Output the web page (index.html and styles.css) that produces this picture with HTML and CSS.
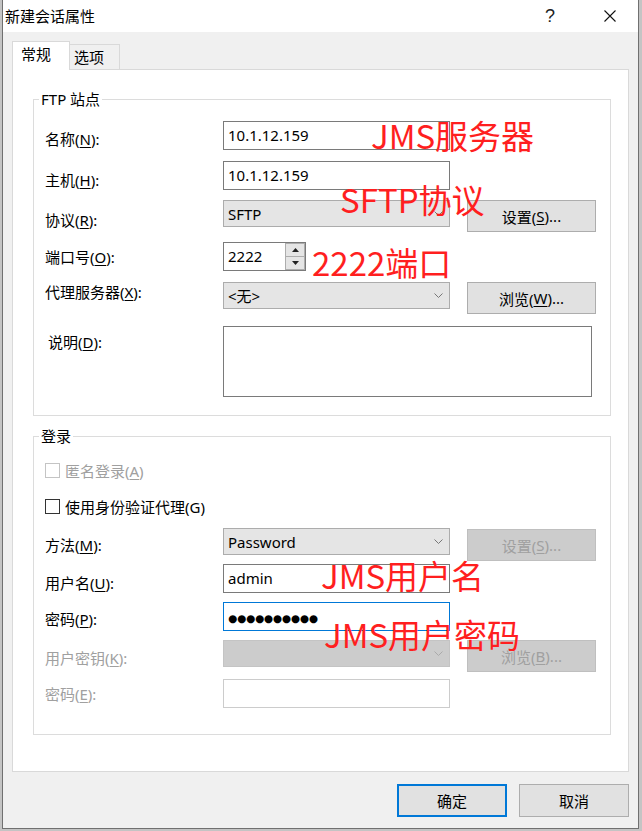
FILE: index.html
```html
<!DOCTYPE html>
<html lang="zh-CN">
<head>
<meta charset="utf-8">
<title>新建会话属性</title>
<link rel="stylesheet" href="styles.css">
</head>
<body>
<div class="window">
  <div class="titlebar">
    <span class="title">新建会话属性</span>
    <span class="help">?</span>
    <span class="close"><svg width="12" height="12" viewBox="0 0 12 12"><path d="M0.5 0.5L11.5 11.5M11.5 0.5L0.5 11.5" stroke="#111" stroke-width="1.1" fill="none"/></svg></span>
  </div>
  <div class="body">
    <div class="tabs">
      <div class="tab active">常规</div>
      <div class="tab">选项</div>
    </div>
    <div class="panel">
      <fieldset class="group group-ftp">
        <legend>FTP 站点</legend>
        <div class="row row-name">
          <label class="lbl lbl-name">名称(<u>N</u>):</label>
          <div class="field">10.1.12.159</div>
        </div>
        <div class="row row-host">
          <label class="lbl lbl-host">主机(<u>H</u>):</label>
          <div class="field">10.1.12.159</div>
        </div>
        <div class="row row-proto">
          <label class="lbl lbl-proto">协议(<u>R</u>):</label>
          <div class="select"><span>SFTP</span><svg class="chev" width="9" height="5" viewBox="0 0 9 5"><path d="M0.5 0.5L4.5 4.5L8.5 0.5" stroke="#777" fill="none"/></svg></div>
          <div class="btn">设置(<u>S</u>)...</div>
        </div>
        <div class="row row-port">
          <label class="lbl lbl-port">端口号(<u>O</u>):</label>
          <div class="field field-port">
            <span class="port-val">2222</span>
            <div class="spin">
              <div class="spin-btn"><svg width="7" height="4" viewBox="0 0 7 4"><path d="M0 4L3.5 0L7 4Z" fill="#222"/></svg></div>
              <div class="spin-btn"><svg width="7" height="4" viewBox="0 0 7 4"><path d="M0 0L3.5 4L7 0Z" fill="#222"/></svg></div>
            </div>
          </div>
        </div>
        <div class="row row-proxy">
          <label class="lbl lbl-proxy">代理服务器(<u>X</u>):</label>
          <div class="select"><span>&lt;无&gt;</span><svg class="chev" width="9" height="5" viewBox="0 0 9 5"><path d="M0.5 0.5L4.5 4.5L8.5 0.5" stroke="#777" fill="none"/></svg></div>
          <div class="btn">浏览(<u>W</u>)...</div>
        </div>
        <div class="row row-desc">
          <label class="lbl lbl-desc">说明(<u>D</u>):</label>
          <div class="textarea"></div>
        </div>
      </fieldset>

      <fieldset class="group group-login">
        <legend>登录</legend>
        <div class="check-row check-anon disabled">
          <span class="box"></span><span>匿名登录(<u>A</u>)</span>
        </div>
        <div class="check-row check-agent">
          <span class="box"></span><span>使用身份验证代理(G)</span>
        </div>
        <div class="row row-method">
          <label class="lbl lbl-method">方法(<u>M</u>):</label>
          <div class="select"><span>Password</span><svg class="chev" width="9" height="5" viewBox="0 0 9 5"><path d="M0.5 0.5L4.5 4.5L8.5 0.5" stroke="#777" fill="none"/></svg></div>
          <div class="btn btn-disabled btn-low">设置(<u>S</u>)...</div>
        </div>
        <div class="row row-user">
          <label class="lbl lbl-user">用户名(<u>U</u>):</label>
          <div class="field">admin</div>
        </div>
        <div class="row row-pass">
          <label class="lbl lbl-pass">密码(<u>P</u>):</label>
          <div class="field field-focus"><span class="dots">●●●●●●●●●●</span></div>
        </div>
        <div class="row row-key">
          <label class="lbl lbl-key disabled">用户密钥(<u>K</u>):</label>
          <div class="select select-disabled"><span></span><svg class="chev" width="9" height="5" viewBox="0 0 9 5"><path d="M0.5 0.5L4.5 4.5L8.5 0.5" stroke="#aaa" fill="none"/></svg></div>
          <div class="btn btn-disabled">浏览(<u>B</u>)...</div>
        </div>
        <div class="row row-phrase">
          <label class="lbl lbl-phrase disabled">密码(<u>E</u>):</label>
          <div class="field field-disabled"></div>
        </div>
      </fieldset>
    </div>
    <div class="footer">
      <div class="dbtn dbtn-default">确定</div>
      <div class="dbtn">取消</div>
    </div>
  </div>

  <div class="note note-server">JMS服务器</div>
  <div class="note note-sftp">SFTP协议</div>
  <div class="note note-port">2222端口</div>
  <div class="note note-user">JMS用户名</div>
  <div class="note note-pass">JMS用户密码</div>
</div>
</body>
</html>
```

FILE: styles.css
```css
* { box-sizing: border-box; }
html, body { margin: 0; padding: 0; }
body {
  background: #c4c4c4;
  font-family: "Noto Sans", "Noto Sans CJK SC", sans-serif;
  font-size: 15px;
  color: #000;
  width: 642px;
  height: 831px;
  overflow: hidden;
}
u { text-decoration: underline; text-underline-offset: 2px; text-decoration-thickness: 1px; }

.window {
  position: relative;
  margin-left: 2px;
  width: 637px;
  height: 829px;
  background: #f0f0f0;
  border: 1px solid #707070;
  border-top: none;
}

.titlebar {
  height: 32px;
  background: #fff;
  display: flex;
  align-items: center;
}
.title { padding-left: 2px; line-height: 32px; font-size: 15px; }
.help {
  margin-left: auto;
  width: 46px;
  text-align: center;
  font-family: "Liberation Sans", sans-serif;
  font-size: 18px;
  line-height: 20px;
  color: #222;
}
.close {
  width: 46px;
  margin-left: 14px;
  margin-right: 5px;
  display: flex;
  justify-content: center;
  align-items: center;
}

.body { padding: 9px 9px 0 9px; }

.tabs {
  display: flex;
  align-items: flex-start;
  height: 29px;
  margin-bottom: -1px;
  position: relative;
  z-index: 1;
}
.tab {
  border: 1px solid #d9d9d9;
  border-bottom: none;
  background: #f0f0f0;
  height: 25px;
  margin-top: 3px;
  width: 51px;
  margin-left: -1px;
  padding-left: 4px;
  line-height: 24px;
  font-size: 15px;
}
.tab.active {
  background: #fff;
  height: 29px;
  margin-top: 0;
  width: 58px;
  margin-left: 0;
  padding-left: 8px;
  position: relative;
  z-index: 2;
}

.panel {
  width: 617px;
  height: 703px;
  background: #fff;
  border: 1px solid #d9d9d9;
  padding: 0 18px 0 20px;
}

.group {
  margin: 0;
  border: 1px solid #dcdcdc;
  min-width: 0;
  width: 578px;
}
.group legend {
  line-height: 20px;
  padding: 0 2px;
  margin-left: -6px;
  font-size: 15px;
}
.group-ftp { margin-top: 19px; padding: 12px 0 18px 11px; }
.group-login { margin-top: 10px; padding: 14px 0 26px 11px; }

.row { display: flex; align-items: flex-start; }
.lbl { width: 178px; flex: none; line-height: 20px; font-size: 15px; }
.disabled { color: #a0a0a0; }

.row-host { margin-top: 11px; }
.row-proto { margin-top: 10px; }
.row-port { margin-top: 10px; }
.row-proxy { margin-top: 11px; }
.row-desc { margin-top: 12px; }

.lbl-name { padding-top: 8px; }
.lbl-host { padding-top: 9px; }
.lbl-proto { padding-top: 10px; }
.lbl-port { padding-top: 5px; }
.lbl-proxy { padding-top: 0; }
.lbl-desc { padding-top: 6px; padding-left: 3px; }

.field {
  width: 227px;
  height: 29px;
  background: #fff;
  border: 1px solid #7a7a7a;
  padding-left: 4px;
  line-height: 27px;
  font-size: 15px;
  flex: none;
}
.field-focus { border-color: #0078d7; }
.field-disabled { border-color: #cccccc; }
.dots { font-family: "DejaVu Sans", sans-serif; font-size: 10.5px; letter-spacing: -0.2px; }

.field-port {
  width: 83px;
  display: flex;
  align-items: stretch;
  padding-right: 0;
}
.port-val { flex: 1; }
.spin { width: 20px; display: flex; flex-direction: column; }
.spin-btn {
  flex: 1;
  background: #e5e5e5;
  border: 1px solid #adadad;
  display: flex;
  align-items: center;
  justify-content: center;
}
.spin-btn + .spin-btn { border-top: none; }

.select {
  width: 227px;
  height: 27px;
  background: #e5e5e5;
  border: 1px solid #acacac;
  padding: 0 6px 0 4px;
  display: flex;
  justify-content: space-between;
  align-items: center;
  font-size: 15px;
  flex: none;
}
.select-disabled { background: #cccccc; border-color: #c4c4c4; }

.btn {
  width: 129px;
  height: 32px;
  margin-left: 17px;
  background: #e1e1e1;
  border: 1px solid #adadad;
  display: flex;
  justify-content: center;
  align-items: center;
  font-size: 15px;
  flex: none;
}
.btn-disabled { background: #cccccc; border-color: #bfbfbf; color: #a0a0a0; }
.btn-low { margin-top: 1px; }

.textarea {
  width: 369px;
  height: 71px;
  border: 1px solid #7a7a7a;
  background: #fff;
}

.check-row { display: flex; align-items: center; height: 20px; }
.check-row .box {
  width: 15px;
  height: 15px;
  border: 1px solid #333;
  background: #fff;
  margin-right: 5px;
}
.check-row.disabled .box { border-color: #c4c4c4; }
.check-agent { margin-top: 16px; }

.row-method { margin-top: 12px; }
.row-user { margin-top: 3px; }
.row-pass { margin-top: 9px; }
.row-key { margin-top: 9px; }
.row-phrase { margin-top: 7px; }

.lbl-method { padding-top: 7px; }
.lbl-user { padding-top: 9px; }
.lbl-pass { padding-top: 7px; }
.lbl-key { padding-top: 8px; }
.lbl-phrase { padding-top: 5px; }

.footer {
  display: flex;
  justify-content: flex-end;
  gap: 12px;
  margin-top: 12px;
}
.dbtn {
  width: 110px;
  height: 33px;
  background: #e1e1e1;
  border: 1px solid #adadad;
  display: flex;
  justify-content: center;
  align-items: center;
  font-size: 15px;
}
.dbtn-default { border: 2px solid #0078d7; }

.note {
  position: absolute;
  color: #ff1f1f;
  font-family: "Noto Sans CJK SC", sans-serif;
  font-size: 33px;
  line-height: 33px;
  white-space: nowrap;
}
.note-server { left: 368px; top: 119px; }
.note-sftp { left: 337px; top: 183px; }
.note-port { left: 309px; top: 246px; }
.note-user { left: 318px; top: 559px; }
.note-pass { left: 321px; top: 618px; }
```
